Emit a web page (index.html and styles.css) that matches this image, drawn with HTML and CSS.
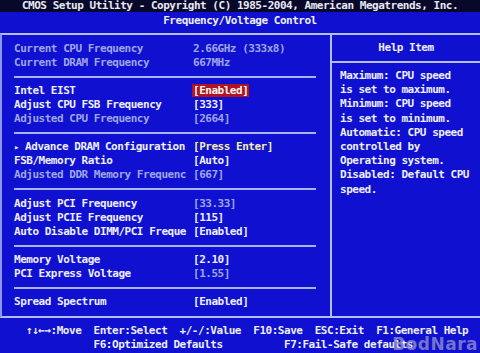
FILE: index.html
```html
<!DOCTYPE html>
<html>
<head>
<meta charset="utf-8">
<link rel="stylesheet" href="styles.css">
</head>
<body>
<div class="screen">
  <div class="topbar">CMOS Setup Utility - Copyright (C) 1985-2004, American Megatrends, Inc.</div>
  <div class="subtitle">Frequency/Voltage Control</div>
  <div class="frame">
    <div class="main">
      <div class="row"><span class="dim">Current CPU Frequency</span><span class="dim">2.66GHz (333x8)</span></div>
      <div class="row"><span class="dim">Current DRAM Frequency</span><span class="dim">667MHz</span></div>
      <div class="sep"></div>
      <div class="row"><span>Intel EIST</span><span><span class="sel">[Enabled]</span></span></div>
      <div class="row"><span>Adjust CPU FSB Frequency</span><span>[333]</span></div>
      <div class="row"><span class="dim">Adjusted CPU Frequency</span><span class="dim">[2664]</span></div>
      <div class="sep"></div>
      <div class="row"><span><span class="tri">▸</span> Advance DRAM Configuration</span><span class="yel">[Press Enter]</span></div>
      <div class="row"><span>FSB/Memory Ratio</span><span>[Auto]</span></div>
      <div class="row"><span class="dim">Adjusted DDR Memory Frequenc</span><span class="dim">[667]</span></div>
      <div class="sep"></div>
      <div class="row"><span>Adjust PCI Frequency</span><span class="dim">[33.33]</span></div>
      <div class="row"><span>Adjust PCIE Frequency</span><span>[115]</span></div>
      <div class="row"><span>Auto Disable DIMM/PCI Freque</span><span>[Enabled]</span></div>
      <div class="sep"></div>
      <div class="row"><span>Memory Voltage</span><span>[2.10]</span></div>
      <div class="row"><span>PCI Express Voltage</span><span class="dim">[1.55]</span></div>
      <div class="sep"></div>
      <div class="row"><span>Spread Spectrum</span><span>[Enabled]</span></div>
    </div>
    <div class="help">
      <div class="help-head">Help Item</div>
      <div class="help-body">
        <div class="hl">Maximum: CPU speed</div>
        <div class="hl">is set to maximum.</div>
        <div class="hl">Minimum: CPU speed</div>
        <div class="hl">is set to minimum.</div>
        <div class="hl">Automatic: CPU speed</div>
        <div class="hl">controlled by</div>
        <div class="hl">Operating system.</div>
        <div class="hl">Disabled: Default CPU</div>
        <div class="hl">speed.</div>
      </div>
    </div>
  </div>
  <div class="footer">
    <div class="fline">↑↓←→:Move  Enter:Select  +/-/:Value  F10:Save  ESC:Exit  F1:General Help</div>
    <div class="fline">           F6:Optimized Defaults          F7:Fail-Safe defaults</div>
  </div>
  <div class="watermark">BodNara</div>
</div>
</body>
</html>
```
FILE: styles.css
```css
html, body {
  margin: 0;
  padding: 0;
}
body {
  background: #1010d0;
  font-family: "DejaVu Sans Mono", "Liberation Mono", monospace;
  font-weight: bold;
  font-size: 11px;
  letter-spacing: -0.48px;
  color: #eceeff;
}
.screen {
  position: relative;
  width: 480px;
  height: 353px;
  overflow: hidden;
  background: #1010d0;
}
.topbar {
  height: 12px;
  line-height: 11px;
  background: #08082a;
  color: #e6e8f4;
  text-align: center;
  white-space: pre;
}
.subtitle {
  height: 21px;
  line-height: 18px;
  text-align: center;
  white-space: pre;
}
.frame {
  display: grid;
  grid-template-columns: 328px 1fr;
  border-top: 2px solid #b4bef6;
  border-bottom: 2px solid #b4bef6;
  border-left: 2px solid #8c96ea;
}
.main {
  padding: 7px 0 7px 12px;
}
.row {
  display: grid;
  grid-template-columns: 179px auto;
  height: 14.05px;
  line-height: 14.05px;
  white-space: pre;
}
.dim {
  color: #9ea6e6;
}
.yel {
  color: #f2eeae;
}
.sel {
  background: #b0141e;
  color: #fff4f4;
  padding: 0 1px;
  margin-left: -1px;
  display: inline-block;
  line-height: 13px;
}
.tri {
  font-size: 9px;
}
.sep {
  height: 14.05px;
  display: flex;
  align-items: center;
}
.sep::before {
  content: "";
  width: 302px;
  height: 2px;
  background: #aab4f4;
}
.help {
  border-left: 2px solid #b4bef6;
}
.help-head {
  height: 26px;
  line-height: 26px;
  text-align: center;
  border-bottom: 2px solid #b4bef6;
}
.help-body {
  padding: 6px 0 0 8px;
}
.hl {
  height: 14.2px;
  line-height: 14.2px;
  white-space: pre;
}
.footer {
  padding: 6px 0 0 26px;
}
.fline {
  height: 14px;
  line-height: 14px;
  white-space: pre;
}
.watermark {
  position: absolute;
  right: 2px;
  bottom: -1px;
  font-family: "DejaVu Sans", sans-serif;
  font-weight: bold;
  font-size: 17px;
  line-height: 20px;
  letter-spacing: 0.5px;
  color: rgba(150, 150, 200, 0.75);
}
```
